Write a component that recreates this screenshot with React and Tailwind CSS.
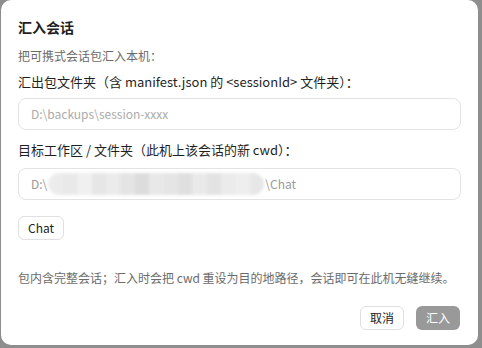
import React from 'react';

const font = { fontFamily: '"Noto Sans CJK SC", "Noto Sans", sans-serif' };

const blocks = ['#ececec', '#e9e9e9', '#f0f0f0', '#e6e6e6', '#ebebeb', '#e4e4e4', '#dcdcdc', '#e8e8e8', '#e5e5e5', '#dfdfdf', '#e9e9e9', '#e3e3e3', '#ebebeb', '#eeeeee', '#e7e7e7'];

const Redacted = () => (
  <span className="relative inline-flex h-[22px] w-[216px] mx-[1px] overflow-hidden rounded-full blur-[1.5px]">
    {blocks.map((c, i) => (
      <span key={i} className="flex-1 h-full" style={{ backgroundColor: c }} />
    ))}
  </span>
);

export default function App() {
  return (
    <div className="w-[482px] h-[348px] bg-[#8e8e8e] overflow-hidden" style={font}>
      <div className="ml-[1px] w-[477px] h-[345px] bg-white rounded-[10px] px-[17px] pt-[16px] flex flex-col text-[#1f1f1f]">
        <h2 className="text-[14px] font-bold leading-[22px]">汇入会话</h2>
        <p className="mt-[9px] text-[12px] leading-[18px] text-[#6b6b6b]">把可携式会话包汇入本机：</p>

        <label className="mt-[7px] text-[13px] leading-[20px]">汇出包文件夹（含 manifest.json 的 &lt;sessionId&gt; 文件夹）：</label>
        <div className="mt-[6px] h-[32px] rounded-[8px] border border-[#e3e3e3] flex items-center px-[12px] text-[12px] text-[#ababab]">
          D:\backups\session-xxxx
        </div>

        <label className="mt-[10px] text-[13px] leading-[20px]">目标工作区 / 文件夹（此机上该会话的新 cwd）：</label>
        <div className="mt-[8px] h-[32px] rounded-[8px] border border-[#e3e3e3] flex items-center px-[12px] text-[12px] text-[#9a9a9a]">
          <span>D:\</span>
          <Redacted />
          <span>\Chat</span>
        </div>

        <div className="mt-[14px]">
          <button className="h-[24px] px-[9px] rounded-[6px] border border-[#e0e0e0] bg-white text-[12px] text-[#222]">Chat</button>
        </div>

        <p className="mt-[29px] text-[12px] leading-[18px] text-[#6b6b6b]">包内含完整会话；汇入时会把 cwd 重设为目的地路径，会话即可在此机无缝继续。</p>

        <div className="mt-auto mb-[15px] flex justify-end gap-[12px] pr-[1px]">
          <button className="h-[24px] w-[44px] rounded-[6px] border border-[#e0e0e0] bg-white text-[12px] text-[#222]">取消</button>
          <button className="h-[24px] w-[44px] rounded-[6px] bg-[#999999] text-[12px] text-white">汇入</button>
        </div>
      </div>
    </div>
  );
}
